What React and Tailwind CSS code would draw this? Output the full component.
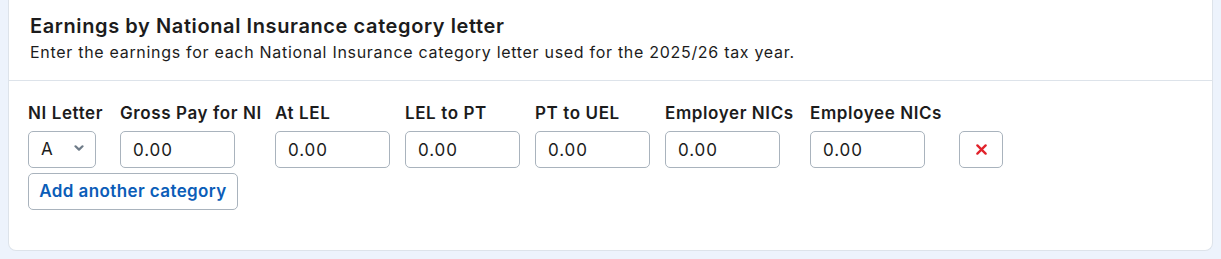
import { useState } from "react";

const columns = [
  { key: "gross", label: "Gross Pay for NI", width: "w-[140px]" },
  { key: "atLel", label: "At LEL", width: "w-[115px]" },
  { key: "lelToPt", label: "LEL to PT", width: "w-[115px]" },
  { key: "ptToUel", label: "PT to UEL", width: "w-[115px]" },
  { key: "employer", label: "Employer NICs", width: "w-[130px]" },
  { key: "employee", label: "Employee NICs", width: "w-[134px]" },
];

const emptyRow = () => ({
  letter: "A",
  gross: "0.00",
  atLel: "0.00",
  lelToPt: "0.00",
  ptToUel: "0.00",
  employer: "0.00",
  employee: "0.00",
});

function MoneyInput({ value, onChange }) {
  return (
    <input
      type="text"
      value={value}
      onChange={(e) => onChange(e.target.value)}
      className="h-[37px] w-[115px] rounded-[5px] border border-[#a9b3bd] bg-white px-3 text-[17px] tracking-[0.9px] text-[#1c1c1c] outline-none"
    />
  );
}

export default function App() {
  const [rows, setRows] = useState([emptyRow()]);

  const update = (i, key, val) =>
    setRows((r) => r.map((row, idx) => (idx === i ? { ...row, [key]: val } : row)));

  return (
    <div className="min-h-[259px] bg-[#edf3fc] px-2 pb-2 font-['Inter',sans-serif] text-[#1c1c1c]">
      <div className="rounded-b-lg border-x border-b border-[#dde3ea] bg-white">
        <div className="border-b border-[#dde3ea] px-[21px] pt-[14px] pb-[18px]">
          <h2 className="text-[20px] font-semibold leading-6 tracking-[0.6px]">
            Earnings by National Insurance category letter
          </h2>
          <p className="mt-1 text-base leading-5 tracking-[0.7px]">
            Enter the earnings for each National Insurance category letter used for the 2025/26 tax year.
          </p>
        </div>

        <div className="px-[19px] pt-[22px] pb-10">
          {rows.map((row, i) => (
            <div key={i} className="flex items-end gap-[15px]">
              <div className="flex w-[77px] flex-col gap-2">
                <span className="whitespace-nowrap text-[17px] font-semibold leading-5 tracking-[0.6px]">NI Letter</span>
                <div className="relative w-[68px]">
                  <select
                    value={row.letter}
                    onChange={(e) => update(i, "letter", e.target.value)}
                    className="h-[37px] w-full appearance-none rounded-[5px] border border-[#a9b3bd] bg-white pl-3 text-[17px] outline-none"
                  >
                    {["A", "B", "C", "H", "J", "M", "Z"].map((l) => (
                      <option key={l}>{l}</option>
                    ))}
                  </select>
                  <svg
                    viewBox="0 0 10 6"
                    className="pointer-events-none absolute left-[46px] top-[14px] h-[6px] w-[10px]"
                    fill="none"
                    stroke="#6e7b88"
                    strokeWidth="2.2"
                    strokeLinecap="round"
                    strokeLinejoin="round"
                  >
                    <path d="M1.5 1.3L5 4.6l3.5-3.3" />
                  </svg>
                </div>
              </div>
              {columns.map((c) => (
                <div key={c.key} className={`flex flex-col gap-2 ${c.width}`}>
                  <span className="whitespace-nowrap text-[17px] font-semibold leading-5 tracking-[0.6px]">{c.label}</span>
                  <MoneyInput value={row[c.key]} onChange={(v) => update(i, c.key, v)} />
                </div>
              ))}
              <button
                type="button"
                onClick={() => setRows((r) => (r.length > 1 ? r.filter((_, idx) => idx !== i) : r))}
                className="flex h-[37px] w-11 items-center justify-center rounded-[5px] border border-[#a9b3bd] bg-white"
                aria-label="Remove"
              >
                <svg viewBox="0 0 12 12" className="h-[11px] w-[11px]" stroke="#e1222b" strokeWidth="2.5" strokeLinecap="round">
                  <path d="M1.5 1.5l9 9M10.5 1.5l-9 9" />
                </svg>
              </button>
            </div>
          ))}
          <button
            type="button"
            onClick={() => setRows((r) => [...r, emptyRow()])}
            className="mt-[5px] h-[37px] w-[210px] rounded-[5px] border border-[#a9b3bd] bg-white text-[17px] font-semibold tracking-[0.4px] text-[#0b5db8]"
          >
            Add another category
          </button>
        </div>
      </div>
    </div>
  );
}
